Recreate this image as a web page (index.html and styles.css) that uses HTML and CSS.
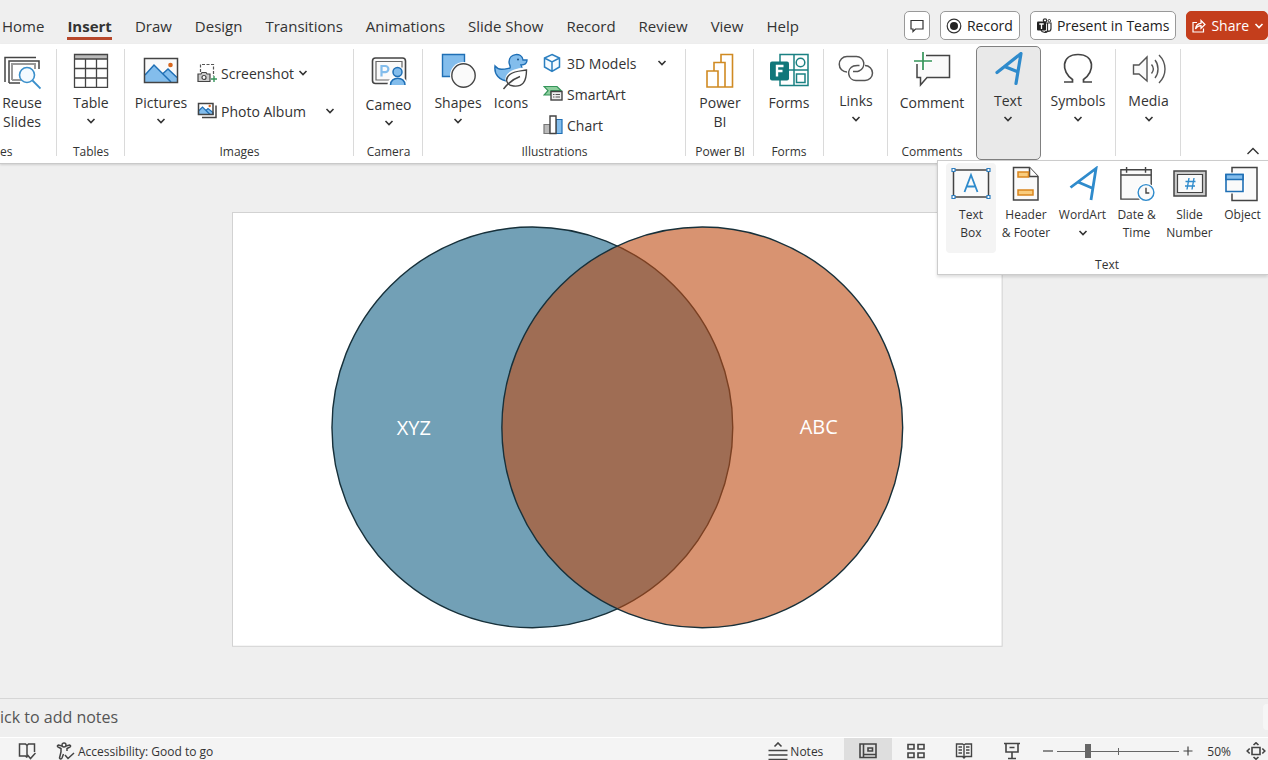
FILE: index.html
```html
<!DOCTYPE html>
<html lang="en">
<head>
<meta charset="utf-8">
<title>Presentation</title>
<link rel="stylesheet" href="styles.css">
</head>
<body>
<svg class="defs" aria-hidden="true">
  <symbol id="chev" viewBox="0 0 10 10"><path d="M1.500 3 5 6.500l3.500-3.500" fill="none" stroke="currentColor" stroke-width="1.600"/></symbol>
</svg>

<header class="topbar">
  <nav class="tabs">
    <a class="tab" href="#">Home</a>
    <a class="tab tab-active" href="#">Insert</a>
    <a class="tab" href="#">Draw</a>
    <a class="tab" href="#">Design</a>
    <a class="tab" href="#">Transitions</a>
    <a class="tab" href="#">Animations</a>
    <a class="tab" href="#">Slide Show</a>
    <a class="tab" href="#">Record</a>
    <a class="tab" href="#">Review</a>
    <a class="tab" href="#">View</a>
    <a class="tab" href="#">Help</a>
  </nav>
  <div class="actions">
    <button class="action action-icon" aria-label="Comments">
      <svg width="14" height="14" viewBox="0 0 14 14"><path d="M1 1.500h12v8.500H5.500L3 12.500V10H1z" fill="none" stroke="#333" stroke-width="1.200"/></svg>
    </button>
    <button class="action action-record">
      <svg width="16" height="16" viewBox="0 0 16 16"><circle cx="8" cy="8" r="6.800" fill="none" stroke="#333" stroke-width="1.200"/><circle cx="8" cy="8" r="4" fill="#222"/></svg>
      Record
    </button>
    <button class="action action-teams">
      <svg width="16" height="16" viewBox="0 0 16 16"><path d="M9 5h6v5.500a3 3 0 0 1-3 3H9M11.500 5v8" fill="none" stroke="#333" stroke-width="1.200"/><circle cx="9" cy="2.500" r="1.700" fill="none" stroke="#333" stroke-width="1.200"/><circle cx="13.300" cy="2.800" r="1.300" fill="none" stroke="#333"/><path d="M5 12c1 3 6 3.500 7 0" fill="none" stroke="#333" stroke-width="1.200"/><rect x="1" y="3.500" width="9" height="9" rx="1" fill="#222"/><path d="M3.300 6h4.400M5.500 6v5" stroke="#fff" stroke-width="1.300"/></svg>
      Present in Teams
    </button>
    <button class="action action-share">
      <svg width="14" height="16" viewBox="0 0 14 16"><path d="M5 4.500H1v9.500h10.500v-3.500M3.500 11c.3-3.500 2-5.500 5.500-5.700V2.500L13 6.500 9 10.300V7.700C6.500 7.700 4.700 9 3.500 11z" fill="none" stroke="#fff" stroke-width="1.200"/></svg>
      Share
      <svg class="chev"><use href="#chev"/></svg>
    </button>
  </div>
</header>

<section class="ribbon">
  <div class="group group-slides">
    <button class="big">
      <span class="pic"><svg width="38" height="38" viewBox="0 0 38 38"><path d="M2 30V5.500h31M6 31V9h30v8M6 31h11" fill="none" stroke="#444" stroke-width="1.500"/><path d="M9 28V12h23v5M9 28h9" fill="none" stroke="#999" stroke-width="2"/><circle cx="24" cy="23" r="7.500" fill="#f4faff" stroke="#3a8fcb" stroke-width="1.600"/><path d="m29.500 28.500 8 8" stroke="#3a8fcb" stroke-width="1.800"/></svg></span>
      <span class="name">Reuse<br>Slides</span>
    </button>
    <span class="caption">es</span>
  </div>

  <div class="group group-tables">
    <button class="big">
      <span class="pic"><svg width="36" height="36" viewBox="0 0 36 36"><rect x="1.500" y="2.500" width="33" height="33" fill="#fff"/><path d="M1.500 2.500h33V7h-33z" fill="#bbb"/><path d="M1.500 2.500h33v33h-33zM1.500 7h33M1.500 16.500h33M1.500 26h33M12.500 7v28.500M23.500 7v28.500" fill="none" stroke="#444" stroke-width="1.300"/></svg></span>
      <span class="name">Table</span>
      <svg class="chev"><use href="#chev"/></svg>
    </button>
    <span class="caption">Tables</span>
  </div>

  <div class="group group-images">
    <div class="row">
      <button class="big pictures">
        <span class="pic"><svg width="36" height="36" viewBox="0 0 36 36"><rect x="1.500" y="6.500" width="33" height="24" fill="#fafafa"/><path d="M2 23 11 13l17 17H2z" fill="#83bdec"/><path d="m20 22 5-5 9 8.500V30h-6z" fill="#83bdec"/><path d="M2 23 11 13l17 17M19.500 22l5.500-5 9 8.500" fill="none" stroke="#1f6fb5" stroke-width="1.500"/><circle cx="27.500" cy="13" r="2.300" fill="#d8661c"/><rect x="1.500" y="6.500" width="33" height="24" fill="none" stroke="#444" stroke-width="1.500"/></svg></span>
        <span class="name">Pictures</span>
        <svg class="chev"><use href="#chev"/></svg>
      </button>
      <div class="stack stack-two">
        <button class="small">
          <svg width="20" height="20" viewBox="0 0 20 20"><path d="M3.500 9V1.500h13V13" fill="none" stroke="#555" stroke-width="1.200" stroke-dasharray="3 1.500"/><path d="M1 11h3l1-1.500h4L10 11h3v7.500H1z" fill="#ccc" stroke="#444" stroke-width="1.200"/><circle cx="7" cy="14.500" r="2" fill="#fff" stroke="#444" stroke-width="1.200"/><path d="M17 13v6M14 16h6" stroke="#35955a" stroke-width="1.400"/></svg>
          Screenshot <svg class="chev"><use href="#chev"/></svg>
        </button>
        <button class="small">
          <svg width="20" height="20" viewBox="0 0 20 20"><path d="M5 16.500h14v-12" fill="none" stroke="#444" stroke-width="1.500"/><path d="M1.500 2.500h14.500v11H1.500z" fill="#fff"/><path d="m1.500 10 4-4 7.500 7.500H1.500zM9 9.500l2-2 5 4v2h-3z" fill="#83bdec" stroke="#1f6fb5" stroke-width="1.200"/><circle cx="12.700" cy="5" r="1.200" fill="#d8661c"/><path d="M1.500 2.500h14.500v11H1.500z" fill="none" stroke="#444" stroke-width="1.500"/></svg>
          Photo Album <svg class="chev chev-far"><use href="#chev"/></svg>
        </button>
      </div>
    </div>
    <span class="caption">Images</span>
  </div>

  <div class="group group-camera">
    <button class="big">
      <span class="pic pic-tall"><svg width="36" height="36" viewBox="0 0 36 36"><rect x="1.500" y="4" width="33" height="25.500" rx="3" fill="#fafafa" stroke="#444" stroke-width="1.600"/><path d="M19 26H5V7.500h26v6" fill="none" stroke="#666" stroke-width="1.200"/><path d="M10.500 22.500V12h3.800a3 3 0 0 1 0 6.200h-3.800" fill="none" stroke="#83bdec" stroke-width="2.200"/><path d="M18 31c0-10 17-10 17 0z" fill="#fff" stroke="#fff" stroke-width="3"/><circle cx="26.500" cy="18" r="4.500" fill="#83bdec" stroke="#1f6fb5" stroke-width="1.500"/><path d="M19.500 31c0-9 14.500-9 14.500 0" fill="#83bdec" stroke="#1f6fb5" stroke-width="1.500"/></svg></span>
      <span class="name">Cameo</span>
      <svg class="chev"><use href="#chev"/></svg>
    </button>
    <span class="caption">Camera</span>
  </div>

  <div class="group group-illus">
    <div class="row">
      <button class="big shapes">
        <span class="pic"><svg width="36" height="36" viewBox="0 0 36 36"><path d="M2.500 2.500h22v22h-22z" fill="#83bdec" stroke="#1f6fb5" stroke-width="1.400"/><circle cx="23.500" cy="23.500" r="13.500" fill="#fff"/><circle cx="23.500" cy="23.500" r="11.700" fill="#fafafa" stroke="#444" stroke-width="1.400"/></svg></span>
        <span class="name">Shapes</span>
        <svg class="chev"><use href="#chev"/></svg>
      </button>
      <button class="big icons">
        <span class="pic"><svg width="36" height="38" viewBox="0 0 36 38"><path d="M2 14c4 5 10 3 15 2 1-2-1-3-1-6 0-9 13-10 14-2h4c0 4-3 5-6 5 4 8-2 16-12 16C6 29 1 22 2 14z" fill="#83bdec" stroke="#1f6fb5" stroke-width="1.400"/><circle cx="25" cy="7.500" r="1" fill="#174f85"/><path d="M35.500 15c1 14-4 22-15 20.500l-9 3.500-2-4 4-4C9 21 20 16 35.500 15z" fill="#fff"/><path d="M33.500 18c0 12-4 17-13 16-8-1-9-8-3-12 4-3 10-3 16-4zM10.500 37C16 30 20 27 27 24.500" fill="none" stroke="#444" stroke-width="1.400"/></svg></span>
        <span class="name">Icons</span>
      </button>
      <div class="stack">
        <button class="small">
          <svg width="20" height="20" viewBox="0 0 20 20"><path d="M9 1.500 16.500 5v9L9 18.500 1.500 14V5zM1.500 5 9 9l7.500-4M9 9v9.500" fill="#f5fbff" stroke="#2b7fc0" stroke-width="1.500"/></svg>
          3D Models <svg class="chev chev-far"><use href="#chev"/></svg>
        </button>
        <button class="small">
          <svg width="20" height="20" viewBox="0 0 20 20"><path d="M1 2.500h13l4 4H8v4.500H1l4-4.300z" fill="#8fcf9f" stroke="#35955a" stroke-width="1.200"/><rect x="8" y="7.500" width="11" height="8.500" fill="#eee" stroke="#444" stroke-width="1.400"/><path d="M10 10.500h1.500M12.500 10.500H17M10 13h1.500M12.500 13H17" stroke="#555"/></svg>
          SmartArt
        </button>
        <button class="small">
          <svg width="20" height="20" viewBox="0 0 20 20"><path d="M1 9.500h6v9H1z" fill="#bbb" stroke="#777" stroke-width="1.200"/><path d="M13 4.500h6v14h-6z" fill="#83bdec" stroke="#1f6fb5" stroke-width="1.200"/><path d="M7 1h6v17.500H7z" fill="#fff" stroke="#444" stroke-width="1.400"/></svg>
          Chart
        </button>
      </div>
    </div>
    <span class="caption">Illustrations</span>
  </div>

  <div class="group group-bi">
    <button class="big">
      <span class="pic"><svg width="36" height="36" viewBox="0 0 36 36"><path d="M5 35v-16h11v16zM12 19v-8.500h11V35h-7M19 10.500V2.500h11.500V35H23" fill="none" stroke="#d08a22" stroke-width="1.600"/></svg></span>
      <span class="name">Power<br>BI</span>
    </button>
    <span class="caption">Power BI</span>
  </div>

  <div class="group group-forms">
    <button class="big">
      <span class="pic"><svg width="40" height="36" viewBox="0 0 40 36"><path d="M11 2.500h28v31H11zM11 18h28M25 2.500v31" fill="none" stroke="#1a8183" stroke-width="1.500"/><circle cx="31.500" cy="10.500" r="4.300" fill="none" stroke="#1a8183" stroke-width="1.500"/><path d="M27.500 22h8.500v8.500h-8.500z" fill="none" stroke="#1a8183" stroke-width="1.500"/><rect x="1" y="9.500" width="19" height="19" rx="2" fill="#11777a"/><path d="M8 24.500V14h6.500M8 19h5.500" fill="none" stroke="#fff" stroke-width="2.400"/></svg></span>
      <span class="name">Forms</span>
    </button>
    <span class="caption">Forms</span>
  </div>

  <div class="group group-links">
    <button class="big">
      <span class="pic pic-short"><svg width="36" height="36" viewBox="0 0 36 36"><path d="M9 20a7.500 7.500 0 0 1 0-15.500h9.500a7.500 7.500 0 0 1 2.500 14.500c-2 1-4 .5-6 .5" fill="none" stroke="#555" stroke-width="1.500"/><path d="M27 13.500a7.500 7.500 0 0 1 0 15h-9a7.500 7.500 0 0 1-2.500-14.500c2-.8 4-.5 6-.5" fill="none" stroke="#555" stroke-width="1.500"/></svg></span>
      <span class="name">Links</span>
      <svg class="chev"><use href="#chev"/></svg>
    </button>
  </div>

  <div class="group group-comments">
    <button class="big">
      <span class="pic"><svg width="38" height="38" viewBox="0 0 38 38"><path d="M13 3.500h23.500v22H14L7.500 33v-7.500H4V12" fill="#fafafa" stroke="#444" stroke-width="1.500"/><path d="M10 0v18M1 9h18" stroke="#fff" stroke-width="4"/><path d="M10 0v18M1 9h18" stroke="#35955a" stroke-width="1.700"/></svg></span>
      <span class="name">Comment</span>
    </button>
    <span class="caption">Comments</span>
  </div>

  <div class="group group-text">
    <button class="big big-open" aria-expanded="true">
      <span class="pic pic-short"><svg width="36" height="36" viewBox="0 0 36 36"><path d="M7 20.500 31 1.500 26 31.500M14.500 14.500 27 19.500" fill="none" stroke="#2f8bcc" stroke-width="3.200" stroke-linecap="round" stroke-linejoin="round"/></svg></span>
      <span class="name">Text</span>
      <svg class="chev"><use href="#chev"/></svg>
    </button>
  </div>

  <div class="group group-symbols">
    <button class="big">
      <span class="pic pic-short"><svg width="36" height="36" viewBox="0 0 36 36"><path d="M4 30h8.500v-2.500C1 20 1 2.500 18 2.500s17 17.500 5.500 25V30H32" fill="none" stroke="#444" stroke-width="1.700"/></svg></span>
      <span class="name">Symbols</span>
      <svg class="chev"><use href="#chev"/></svg>
    </button>
  </div>

  <div class="group group-media">
    <button class="big">
      <span class="pic pic-short"><svg width="36" height="36" viewBox="0 0 36 36"><path d="M2.500 13h5.500l8-8v24l-8-7H2.500z" fill="#fafafa" stroke="#555" stroke-width="1.400"/><path d="M20.500 12.500c2.500 3 2.500 6 0 9M24 8c4 5 4 13 0 18M28 3c8 8 8 20 0 28" fill="none" stroke="#555" stroke-width="1.400"/></svg></span>
      <span class="name">Media</span>
      <svg class="chev"><use href="#chev"/></svg>
    </button>
  </div>

  <button class="collapse" aria-label="Collapse ribbon"><svg width="14" height="10" viewBox="0 0 14 10"><path d="m1.500 8 5.500-5.500L12.500 8" fill="none" stroke="#333" stroke-width="1.400"/></svg></button>

  <div class="flyout">
    <div class="flyout-items">
      <button class="item item-box item-hover">
        <svg width="40" height="36" viewBox="0 0 40 36"><path d="M2.500 4h35v27h-35z" fill="#fafafa" stroke="#444" stroke-width="1.500"/><path d="m13.500 26 6.500-17 6.500 17M15.500 20.500h9" fill="none" stroke="#2f8bcc" stroke-width="1.800"/><path d="M1 2.500h3v3H1zM36 2.500h3v3h-3zM1 29.500h3v3H1zM36 29.500h3v3h-3z" fill="#fff" stroke="#2f7fc0" stroke-width="1.200"/></svg>
        <span>Text<br>Box</span>
      </button>
      <button class="item item-header">
        <svg width="36" height="36" viewBox="0 0 36 36"><path d="M5.500 1.500h16l8.500 9v23.500H5.500z" fill="#fafafa" stroke="#444" stroke-width="1.500"/><path d="M21.500 1.500v9h8.500" fill="#fff" stroke="#444" stroke-width="1.500"/><path d="M10 6h10.500v5H10zM10 24h15v5H10z" fill="#f9cc7d" stroke="#d9851e" stroke-width="1.500"/></svg>
        <span>Header<br>&amp; Footer</span>
      </button>
      <button class="item item-wordart">
        <svg width="36" height="36" viewBox="0 0 36 36"><path d="M5.500 21.500 31 2.500 26 34M13 16 27 22" fill="none" stroke="#2f8bcc" stroke-width="2.800"/></svg>
        <span>WordArt</span>
        <svg class="chev"><use href="#chev"/></svg>
      </button>
      <button class="item item-date">
        <svg width="38" height="38" viewBox="0 0 38 38"><path d="M2 4h32v31H2z" fill="#fafafa" stroke="#444" stroke-width="1.500"/><path d="M2 9.500h32M8 1v6M28 1v6" stroke="#444" stroke-width="1.500"/><circle cx="28.500" cy="28" r="10" fill="#fff"/><circle cx="28.500" cy="28" r="8.300" fill="#fafafa" stroke="#2f8bcc" stroke-width="1.500"/><path d="M28.500 23v5.500H32" fill="none" stroke="#444" stroke-width="1.500"/></svg>
        <span>Date &amp;<br>Time</span>
      </button>
      <button class="item item-number">
        <svg width="36" height="36" viewBox="0 0 36 36"><path d="M2 5h32v25H2z" fill="#ccc" stroke="#444" stroke-width="1.500"/><path d="M5.500 8.500h25v18h-25z" fill="#fafafa" stroke="#444" stroke-width="1.200"/><path d="m17 12-2 11.500M22 12l-2 11.500M13.500 15.500h10M13 20h10" stroke="#2f8bcc" stroke-width="1.400"/></svg>
        <span>Slide<br>Number</span>
      </button>
      <button class="item item-object">
        <svg width="36" height="36" viewBox="0 0 36 36"><path d="M7 1.500h25v33H7z" fill="#fafafa" stroke="#444" stroke-width="1.500"/><path d="M-1 6.500h21v21H-1z" fill="#fff"/><path d="M1 8.500h17v17H1z" fill="#fafafa" stroke="#1f6fb5" stroke-width="1.600"/><path d="M1 8.500h17v5H1z" fill="#83bdec" stroke="#1f6fb5" stroke-width="1.600"/></svg>
        <span>Object</span>
      </button>
    </div>
    <span class="flyout-caption">Text</span>
  </div>
</section>

<main class="workspace">
  <svg class="slide" viewBox="0 0 771 435" role="img" aria-label="Venn diagram">
    <rect x="0.500" y="0.500" width="770" height="434" fill="#fff" stroke="#d2d2d2"/>
    <circle cx="300.500" cy="215.500" r="200.500" fill="#72a0b6" stroke="#17303a" stroke-width="1.400"/>
    <circle cx="470.500" cy="215.500" r="200.500" fill="#be4b12" fill-opacity="0.600" stroke="#17303a" stroke-width="1.400"/>
    <text class="slide-text" x="182" y="223">XYZ</text>
    <text class="slide-text" x="587" y="222">ABC</text>
  </svg>
</main>

<section class="notes">
  <span>ick to add notes</span>
  <span class="notes-scroll"></span>
</section>

<footer class="status">
  <button class="status-btn spell" aria-label="Proofing"><svg width="18" height="18" viewBox="0 0 18 18"><path d="M9 15.500 7.500 14H1.500V2h6L9 3.500 10.500 2h6v8M9 3.500v12M9.500 13l3 3.500 5-5.500" fill="none" stroke="#444" stroke-width="1.500"/></svg></button>
  <button class="status-btn access">
    <svg width="20" height="18" viewBox="0 0 20 18"><circle cx="8" cy="3" r="2" fill="none" stroke="#444" stroke-width="1.400"/><path d="M6 4 2.500 3c-2 1-1 2 .5 2.500l2 1V10l-1.500 6c.5 1.500 2 1 2.500 0l1.500-4M10 4l3.500-1c2 1 1 2-.5 2.500l-2 1V9M9 13l3 3.500L18 11" fill="none" stroke="#444" stroke-width="1.500"/></svg>
    Accessibility: Good to go
  </button>
  <button class="status-btn notes-btn">
    <svg width="20" height="18" viewBox="0 0 20 18"><path d="m6.500 4.500 3.500-3.500 3.500 3.500M.5 8.500h19M.5 13h19M.5 17.500h19" fill="none" stroke="#444" stroke-width="1.600"/></svg>
    Notes
  </button>
  <div class="views">
    <button class="view view-active" aria-label="Normal"><svg width="18" height="16" viewBox="0 0 18 16"><path d="M1 1h16v13.500H1zM4.500 1v13.500M4.500 11.500H17M9 5h4.500v3H9z" fill="none" stroke="#444" stroke-width="1.600"/></svg></button>
    <button class="view" aria-label="Slide sorter"><svg width="18" height="16" viewBox="0 0 18 16"><path d="M1 1.500h6v4.500H1zM11 1.500h6v4.500h-6zM1 10h6v4.500H1zM11 10h6v4.500h-6z" fill="none" stroke="#444" stroke-width="1.600"/></svg></button>
    <button class="view" aria-label="Reading view"><svg width="18" height="18" viewBox="0 0 18 18"><path d="M9 16 7.500 14.500h-6V2h6L9 3l1.500-1h6v12.500h-6zM9 3v13M3.500 5H7M3.500 8H7M3.500 11H7M11 5h3.500M11 8h3.500M11 11h3.500" fill="none" stroke="#444" stroke-width="1.400"/></svg></button>
    <button class="view" aria-label="Slide show"><svg width="18" height="18" viewBox="0 0 18 18"><path d="M1 1.500h16M3 1.500v8.500h12V1.500M6.500 5.500h5M9 10v6.500M5 16.500h8" fill="none" stroke="#444" stroke-width="1.600"/></svg></button>
  </div>
  <div class="zoom">
    <button class="status-btn" aria-label="Zoom out"><svg width="12" height="12" viewBox="0 0 12 12"><path d="M1 6h10" stroke="#444" stroke-width="1.200"/></svg></button>
    <input class="zoom-range" type="range" min="0" max="100" value="24" aria-label="Zoom">
    <button class="status-btn" aria-label="Zoom in"><svg width="12" height="12" viewBox="0 0 12 12"><path d="M1.500 6h9M6 1.500v9" stroke="#444" stroke-width="1.200"/></svg></button>
  </div>
  <button class="status-btn percent">50%</button>
  <button class="status-btn fit" aria-label="Fit slide"><svg width="20" height="18" viewBox="0 0 20 18"><path d="M6 5.500h8v7H6zM7.500 3 10 .8 12.500 3M7.500 15l2.500 2.200 2.500-2.200M3.700 6.500 1.200 9l2.500 2.500M16.300 6.500 18.800 9l-2.500 2.500" fill="none" stroke="#444" stroke-width="1.600"/></svg></button>
</footer>
</body>
</html>
```
FILE: styles.css
```css
* { box-sizing: border-box; }

body {
  margin: 0;
  height: 100vh;
  overflow: hidden;
  display: flex;
  flex-direction: column;
  background: #efefef;
  color: #333;
  font-family: "Open Sans", "Noto Sans", sans-serif;
  font-size: 14px;
}

button {
  margin: 0;
  padding: 0;
  border: 0;
  background: none;
  color: inherit;
  font: inherit;
}

svg { flex: none; display: block; }
.defs { position: absolute; width: 0; height: 0; }
.chev { width: 10px; height: 10px; }

/* Tabs and window actions */
.topbar {
  flex: none;
  display: flex;
  justify-content: space-between;
  height: 44px;
  padding: 11px 0 0 2px;
}
.tabs { display: flex; gap: 23px; }
.tab {
  height: 29px;
  color: #333;
  font-size: 15px;
  line-height: 31px;
  text-decoration: none;
  white-space: nowrap;
}
.tab-active { font-weight: 700; border-bottom: 3px solid #b7472a; }
.actions { display: flex; gap: 10px; height: 29px; }
.action {
  display: flex;
  align-items: center;
  gap: 5px;
  padding: 0 6px 0 5px;
  border: 1px solid #999;
  border-radius: 5px;
  background: #fff;
  color: #222;
  font-size: 14px;
  white-space: nowrap;
}
.action-icon { padding: 0 5px; }
.action-share { background: #c43e1c; border-color: #c43e1c; color: #fff; padding: 0 3px 0 5px; }

/* Ribbon */
.ribbon {
  position: relative;
  z-index: 1;
  flex: none;
  display: flex;
  height: 120px;
  background: #fff;
  border-bottom: 1px solid #c9c9c9;
  box-shadow: 0 1px 2px #0002;
}
.group {
  flex: none;
  display: flex;
  flex-direction: column;
  justify-content: space-between;
  align-items: center;
  padding: 8px 0 2px;
  background: linear-gradient(#dadada, #dadada) right 5px / 1px 107px no-repeat;
}
.group-slides { width: 57px; padding-right: 13px; }
.group-slides .caption { align-self: flex-start; }
.group-tables { width: 68px; }
.group-images { width: 229px; }
.group-camera { width: 69px; }
.group-illus { width: 263px; }
.group-bi { width: 68px; }
.group-forms { width: 70px; }
.group-links { width: 64px; }
.group-comments { width: 88px; background: none; }
.group-text { width: 64px; padding: 2px 0 3px; background: none; }
.group-symbols { width: 76px; }
.group-media { width: 65px; }
.caption { font-size: 12px; line-height: 18px; }
.big { display: flex; flex-direction: column; align-items: center; }
.pic { display: flex; align-items: flex-start; justify-content: center; height: 41px; }
.pic-tall { height: 43px; padding-top: 2px; }
.pic-short { height: 39px; }
.name { line-height: 19px; }
.big .chev { margin-top: 4px; }
.big-open {
  width: 65px;
  height: 115px;
  padding-top: 5px;
  border: 1px solid #808080;
  border-radius: 5px;
  background: #e9e9e9;
}
.row { align-self: stretch; display: flex; align-items: flex-start; }
.pictures { width: 72px; }
.shapes { width: 52px; margin-left: 9px; }
.icons { width: 54px; }
.stack {
  flex: 1;
  display: flex;
  flex-direction: column;
  gap: 11px;
  padding: 1px 0 0 5px;
}
.stack-two { gap: 18px; padding: 11px 0 0; }
.small { display: flex; align-items: center; gap: 4px; height: 20px; white-space: nowrap; }
.chev-far { margin: 0 19px 0 auto; }
.collapse { margin: auto 8px 7px auto; }

/* Text flyout */
.flyout {
  position: absolute;
  right: 0;
  top: 116px;
  width: 331px;
  height: 115px;
  overflow: hidden;
  padding: 2px 0 0 8px;
  border: 1px solid #ccc;
  border-right: 0;
  background: #fff;
  box-shadow: 0 2px 3px #0002;
}
.flyout-items { display: flex; }
.item {
  flex: none;
  display: flex;
  flex-direction: column;
  align-items: center;
  justify-content: flex-start;
  gap: 4px;
  height: 90px;
  padding-top: 3px;
  font-size: 12px;
  line-height: 18px;
  border-radius: 4px;
}
.item svg { height: 36px; }
.item .chev { height: 10px; }
.item-hover { background: #f4f4f4; }
.item-box { width: 50px; }
.item-header { width: 60px; }
.item-wordart { width: 53px; }
.item-date { width: 55px; }
.item-number { width: 51px; }
.item-object { width: 55px; }
.flyout-caption { display: block; text-align: center; font-size: 12px; line-height: 24px; }

/* Slide */
.workspace {
  flex: 1;
  min-height: 0;
  display: flex;
  align-items: center;
  justify-content: center;
  padding: 0 33px 3px 0;
}
.slide { width: 62.4%; }
.slide-text { fill: #fff; font-size: 20px; text-anchor: middle; }

.notes {
  flex: none;
  display: flex;
  align-items: center;
  justify-content: space-between;
  height: 39px;
  padding-bottom: 2px;
  border-top: 1px solid #d6d6d6;
  color: #555;
  font-size: 16px;
}
.notes-scroll { width: 5px; height: 26px; border-radius: 4px 0 0 4px; background: #f6f6f6; }

/* Status bar */
.status {
  flex: none;
  display: flex;
  align-items: center;
  height: 23px;
  padding-top: 4px;
  overflow: hidden;
  background: #f4f4f4;
  border-top: 1px solid #fff;
  font-size: 12px;
}
.status-btn { display: flex; align-items: center; gap: 2px; white-space: nowrap; }
.spell { margin-left: 18px; }
.access { margin-left: 20px; }
.notes-btn { margin-left: auto; }
.views { display: flex; margin: -5px 6px 0 21px; }
.view { display: flex; justify-content: center; align-items: center; width: 48px; height: 24px; padding-top: 4px; }
.view-active { background: #dedede; }
.zoom { display: flex; align-items: center; gap: 3px; }
.zoom-range {
  appearance: none;
  width: 122px;
  height: 16px;
  margin: 0;
  background:
    linear-gradient(#666, #666) center / 1px 7px no-repeat,
    linear-gradient(#666, #666) center / 100% 1px no-repeat;
}
.zoom-range::-webkit-slider-thumb { appearance: none; width: 6px; height: 14px; background: #666; }
.percent { margin-left: 13px; }
.fit { margin: 0 2px 0 15px; }
```
